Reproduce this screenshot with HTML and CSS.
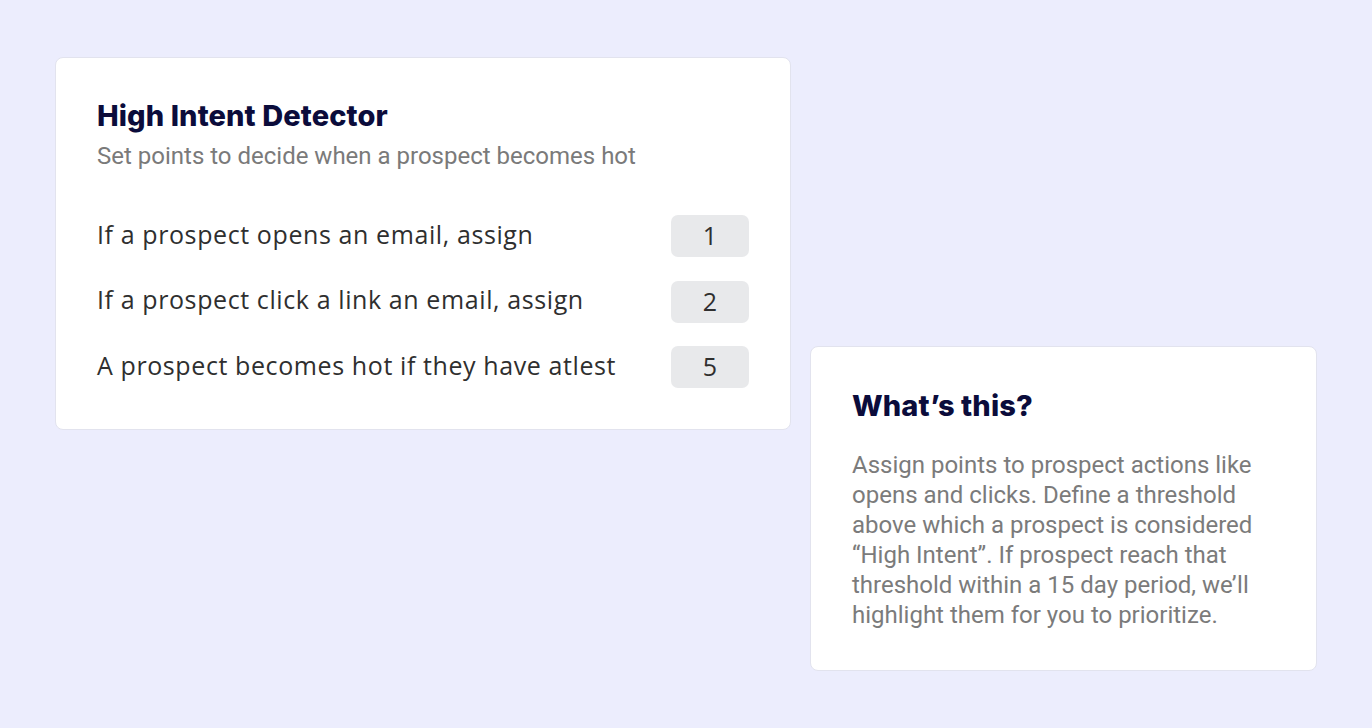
FILE: index.html
```html
<!DOCTYPE html>
<html>
<head>
<meta charset="utf-8">
<link rel="stylesheet" href="styles.css">
</head>
<body>
<div class="page">
  <section class="card detector">
    <h1 class="title">High Intent Detector</h1>
    <p class="subtitle">Set points to decide when a prospect becomes hot</p>
    <div class="rows">
      <div class="row"><span class="label">If a prospect opens an email, assign</span><span class="badge">1</span></div>
      <div class="row"><span class="label">If a prospect click a link an email, assign</span><span class="badge">2</span></div>
      <div class="row"><span class="label">A prospect becomes hot if they have atlest</span><span class="badge">5</span></div>
    </div>
  </section>
  <section class="card info">
    <h2 class="title">What’s this?</h2>
    <p class="body">Assign points to prospect actions like opens and clicks. Define a threshold above which a prospect is considered “High Intent”. If prospect reach that threshold within a 15 day period, we’ll highlight them for you to prioritize.</p>
  </section>
</div>
</body>
</html>
```

FILE: styles.css
```css
html, body {
  margin: 0;
  padding: 0;
  background: #ECEDFD;
}
.page {
  width: 1372px;
  height: 728px;
  box-sizing: border-box;
  padding: 57px 0 0 55px;
  display: flex;
  align-items: flex-start;
  gap: 19px;
}
.card {
  background: #fff;
  border: 1px solid #E2E3EE;
  border-radius: 8px;
  box-sizing: border-box;
}
.title {
  margin: 0;
  font-family: Inter, "Liberation Sans", sans-serif;
  font-weight: 800;
  font-size: 29px;
  line-height: 32px;
  color: #0B0C3B;
  letter-spacing: 0.1px;
}
.detector {
  width: 736px;
  height: 373px;
  padding: 42px 41px 0 41px;
}
.subtitle {
  margin: 10px 0 0 0;
  font-family: Roboto, sans-serif;
  font-size: 24px;
  line-height: 28px;
  color: #7A7A7A;
}
.rows {
  margin-top: 45px;
  display: flex;
  flex-direction: column;
  gap: 23.5px;
}
.row {
  display: flex;
  justify-content: space-between;
  align-items: center;
  height: 42px;
}
.label {
  font-family: "Open Sans", sans-serif;
  font-size: 25px;
  line-height: 30px;
  padding-bottom: 5px;
  letter-spacing: 0.6px;
  color: #2F2F2F;
}
.badge {
  width: 78px;
  height: 42px;
  border-radius: 7px;
  background: #E8E9EB;
  display: flex;
  align-items: center;
  justify-content: center;
  font-family: "Open Sans", sans-serif;
  font-size: 25px;
  padding-bottom: 2px;
  box-sizing: border-box;
  color: #2F2F2F;
}
.info {
  margin-top: 289px;
  width: 507px;
  height: 325px;
  padding: 43px 41px 0 41px;
}
.body {
  margin: 28px 0 0 0;
  font-family: Roboto, sans-serif;
  font-size: 24px;
  line-height: 30px;
  color: #7B7B7B;
}
```
